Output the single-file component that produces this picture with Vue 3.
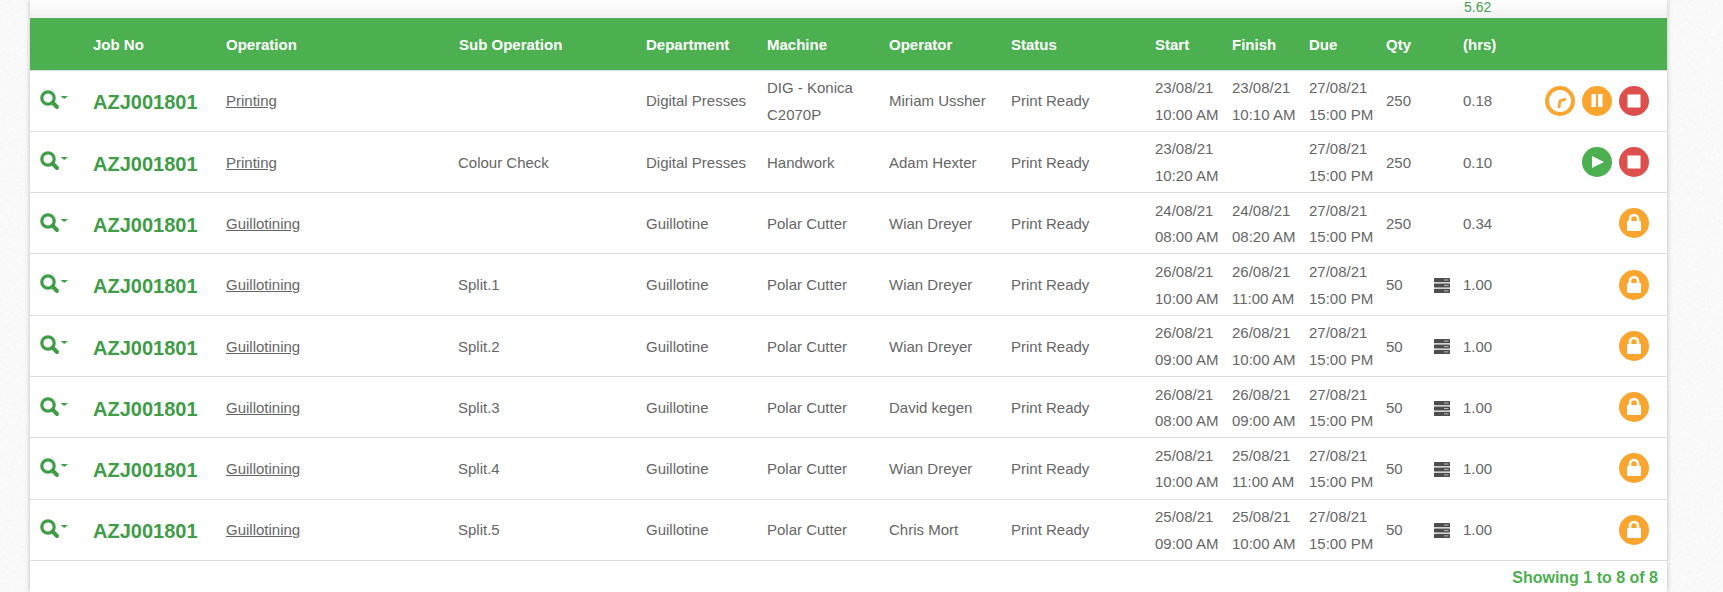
<script setup>
const base = { job: 'AZJ001801', op: 'Guillotining', dept: 'Guillotine', machine: 'Polar Cutter', status: 'Print Ready', due: '27/08/21', dueT: '15:00 PM', qty: 50, hrs: '1.00', stack: true, actions: ['lock'] }
const rows = [
  { ...base, op: 'Printing', sub: '', dept: 'Digital Presses', machine: 'DIG - Konica C2070P', operator: 'Miriam Ussher', start: '23/08/21', startT: '10:00 AM', finish: '23/08/21', finishT: '10:10 AM', qty: 250, hrs: '0.18', stack: false, actions: ['clock', 'pause', 'stop'] },
  { ...base, op: 'Printing', sub: 'Colour Check', dept: 'Digital Presses', machine: 'Handwork', operator: 'Adam Hexter', start: '23/08/21', startT: '10:20 AM', finish: '', finishT: '', qty: 250, hrs: '0.10', stack: false, actions: ['play', 'stop'] },
  { ...base, sub: '', operator: 'Wian Dreyer', start: '24/08/21', startT: '08:00 AM', finish: '24/08/21', finishT: '08:20 AM', qty: 250, hrs: '0.34', stack: false },
  { ...base, sub: 'Split.1', operator: 'Wian Dreyer', start: '26/08/21', startT: '10:00 AM', finish: '26/08/21', finishT: '11:00 AM' },
  { ...base, sub: 'Split.2', operator: 'Wian Dreyer', start: '26/08/21', startT: '09:00 AM', finish: '26/08/21', finishT: '10:00 AM' },
  { ...base, sub: 'Split.3', operator: 'David kegen', start: '26/08/21', startT: '08:00 AM', finish: '26/08/21', finishT: '09:00 AM' },
  { ...base, sub: 'Split.4', operator: 'Wian Dreyer', start: '25/08/21', startT: '10:00 AM', finish: '25/08/21', finishT: '11:00 AM' },
  { ...base, sub: 'Split.5', operator: 'Chris Mort', start: '25/08/21', startT: '09:00 AM', finish: '25/08/21', finishT: '10:00 AM' },
]
const widths = [63, 133, 232, 188, 121, 122, 122, 144, 77, 77, 77, 48, 29, 204]
</script>

<template>
  <div class="page">
    <svg class="texture" width="1723" height="592">
      <filter id="paper">
        <feTurbulence type="fractalNoise" baseFrequency="0.35" numOctaves="2" seed="4" />
        <feColorMatrix values="0 0 0 0 0.9  0 0 0 0 0.9  0 0 0 0 0.9  0.9 0 0 0 -0.2" />
      </filter>
      <rect width="1723" height="592" fill="#fbfbfb" />
      <rect width="1723" height="592" filter="url(#paper)" />
    </svg>
    <div class="card">
      <div class="top"><span class="total">5.62</span></div>
      <table>
        <colgroup>
          <col v-for="(w, i) in widths" :key="i" :style="{ width: w + 'px' }" />
        </colgroup>
        <thead>
          <tr>
            <th></th>
            <th>Job No</th>
            <th>Operation</th>
            <th class="subhead">Sub Operation</th>
            <th>Department</th>
            <th>Machine</th>
            <th>Operator</th>
            <th>Status</th>
            <th>Start</th>
            <th>Finish</th>
            <th>Due</th>
            <th>Qty</th>
            <th></th>
            <th>(hrs)</th>
          </tr>
        </thead>
        <tbody>
          <tr v-for="(r, i) in rows" :key="i">
            <td class="search">
              <svg width="30" height="20" viewBox="0 0 30 20">
                <circle cx="8" cy="8" r="6.2" fill="none" stroke="#3f9c47" stroke-width="3.2" />
                <path d="M12.5 12.5 L17 17" stroke="#3f9c47" stroke-width="4" stroke-linecap="round" />
                <path d="M20.5 6 H28 L24.2 9 Z" fill="#3f9c47" />
              </svg>
            </td>
            <td class="job">{{ r.job }}</td>
            <td><a class="link">{{ r.op }}</a></td>
            <td>{{ r.sub }}</td>
            <td>{{ r.dept }}</td>
            <td class="machine">{{ r.machine }}</td>
            <td>{{ r.operator }}</td>
            <td>{{ r.status }}</td>
            <td class="dt">{{ r.start }}<br />{{ r.startT }}</td>
            <td class="dt">{{ r.finish }}<br />{{ r.finishT }}</td>
            <td class="dt">{{ r.due }}<br />{{ r.dueT }}</td>
            <td>{{ r.qty }}</td>
            <td class="stackcell">
              <svg v-if="r.stack" width="16" height="15" viewBox="0 0 16 15" class="stack">
                <rect y="0" width="16" height="4.2" rx="0.5" fill="#4d4d4d" />
                <rect y="5.4" width="16" height="4.2" rx="0.5" fill="#4d4d4d" />
                <rect y="10.8" width="16" height="4.2" rx="0.5" fill="#4d4d4d" />
                <path d="M10 2H14.5M10 7.5H14.5M10 12.9H14.5" stroke="#d8d8d8" stroke-width="0.8" />
              </svg>
            </td>
            <td>
              <div class="hrscell">
                <span>{{ r.hrs }}</span>
                <div class="actions">
                  <template v-for="a in r.actions" :key="a">
                    <span v-if="a === 'clock'" class="btn ring">
                      <svg width="30" height="30" viewBox="0 0 30 30"><path d="M13.8 22 L15 14.8 L21 13" fill="none" stroke="#faa52f" stroke-width="2.8" /></svg>
                    </span>
                    <span v-else-if="a === 'pause'" class="btn orange">
                      <svg width="30" height="30" viewBox="0 0 30 30"><rect x="9.5" y="8" width="4.5" height="13" fill="#fff" /><rect x="16" y="8" width="4.5" height="13" fill="#fff" /></svg>
                    </span>
                    <span v-else-if="a === 'stop'" class="btn red">
                      <svg width="30" height="30" viewBox="0 0 30 30"><rect x="8.5" y="8.5" width="13" height="13" fill="#fff" /></svg>
                    </span>
                    <span v-else-if="a === 'play'" class="btn green">
                      <svg width="30" height="30" viewBox="0 0 30 30"><path d="M10 9 L22 15 L10 21 Z" fill="#fff" /></svg>
                    </span>
                    <span v-else class="btn orange">
                      <svg width="30" height="30" viewBox="0 0 30 30">
                        <path d="M11 14 V11 A4 4 0 0 1 19 11 V14" fill="none" stroke="#fff" stroke-width="2.6" />
                        <rect x="8" y="13" width="14" height="10" rx="1" fill="#fff" />
                      </svg>
                    </span>
                  </template>
                </div>
              </div>
            </td>
          </tr>
        </tbody>
      </table>
      <div class="foot">Showing 1 to 8 of 8</div>
    </div>
  </div>
</template>

<style scoped>
.page {
  position: relative;
  height: 592px;
  overflow: hidden;
  padding: 0 56px 0 30px;
  font-family: "Liberation Sans", Arial, sans-serif;
  font-size: 15px;
  color: #666;
}
.texture {
  position: absolute;
  left: 0;
  top: 0;
}
.card {
  position: relative;
  background: #fff;
  width: 1637px;
  height: 592px;
  box-shadow: 0 0 5px rgba(0,0,0,.25);
}
.top {
  height: 18px;
  background: linear-gradient(#ffffff, #f1f1f1);
  box-sizing: border-box;
  padding-left: 1434px;
}
.total {
  font-size: 14px;
  line-height: 14px;
  color: #47a04f;
  display: block;
}
table {
  border-collapse: collapse;
  table-layout: fixed;
  width: 1637px;
}
th {
  background: #4caf50;
  color: #fff;
  font-weight: bold;
  text-align: left;
  height: 52px;
  padding: 2px 0 0;
  box-sizing: border-box;
  border-bottom: 1px solid #ddd;
}
.subhead {
  padding-left: 1px;
}
td {
  box-sizing: border-box;
  height: 61.3px;
  padding: 2px 0 0;
  border-bottom: 1px solid #ddd;
  vertical-align: middle;
  line-height: 26.5px;
  white-space: nowrap;
}
.machine {
  white-space: normal;
  padding-right: 30px;
}
.search {
  padding-left: 10px;
}
.search svg {
  display: block;
  margin-top: -3px;
}
.job {
  font-size: 20px;
  font-weight: bold;
  color: #3f9c47;
  padding-top: 4px;
}
.link {
  color: #666;
  text-decoration: underline;
}
.stack {
  display: block;
}
.hrscell {
  display: flex;
  align-items: center;
  justify-content: space-between;
  padding-right: 18px;
}
.actions {
  display: flex;
  gap: 7px;
  margin-top: -2px;
}
.btn {
  width: 30px;
  height: 30px;
  border-radius: 50%;
  display: block;
  box-sizing: border-box;
}
.btn svg {
  display: block;
}
.orange { background: #faa52f; }
.red { background: #dc4f4c; }
.green { background: #4caf50; }
.ring {
  border: 4px solid #faa52f;
  background: #fff;
}
.ring svg {
  margin: -4px;
}
.foot {
  text-align: right;
  padding: 8px 9px 0 0;
  font-weight: bold;
  color: #4caf50;
  font-size: 16px;
}
</style>
